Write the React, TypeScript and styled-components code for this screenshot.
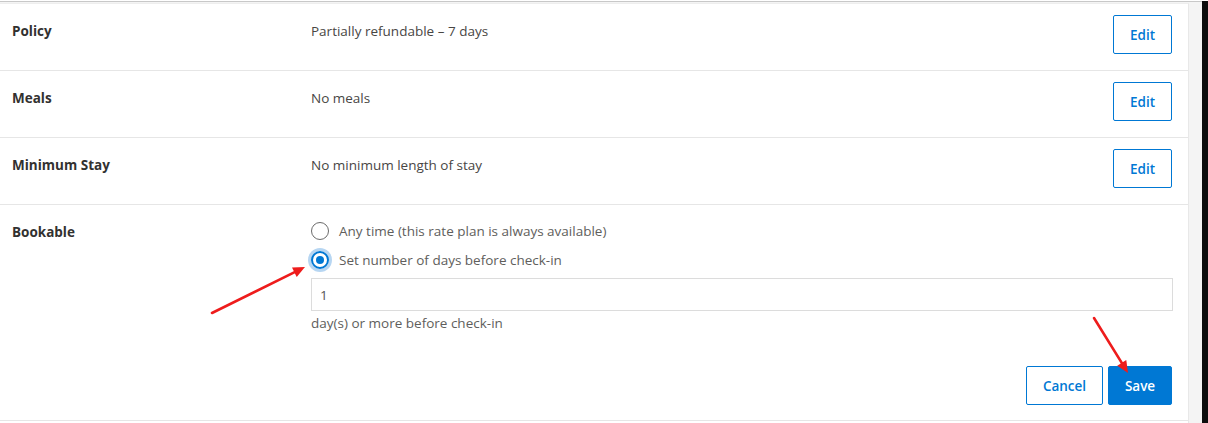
import React from 'react'
import styled, { createGlobalStyle } from 'styled-components'

const GlobalStyle = createGlobalStyle`
  html, body {
    margin: 0;
    padding: 0;
    background: #f4f4f4;
  }
  body {
    font-family: 'Open Sans', 'Liberation Sans', sans-serif;
    color: #323130;
  }
`

const Page = styled.div`
  position: relative;
  display: flex;
  width: 1208px;
  height: 423px;
  overflow: hidden;
  border-top: 1px solid #fff;
`

const Main = styled.div`
  flex: 1;
  display: flex;
  flex-direction: column;
  border-top: 1px solid #c8c8c8;
`

const Panel = styled.div`
  width: 1188px;
  margin-top: 1px;
  background: #fff;
  border-top: 1px solid #eeeeee;
  border-right: 1px solid #e8e8e8;
  flex: 1;
`

const Edge = styled.div`
  flex: 0 0 6px;
  background: #0d0d0d;
`

const Row = styled.div<{ $tall?: boolean }>`
  display: grid;
  grid-template-columns: 299px 1fr auto;
  align-items: start;
  height: ${(p) => (p.$tall ? '215px' : '66px')};
  padding: 0 16px 0 12px;
  border-bottom: 1px solid #e6e6e6;
`

const Label = styled.div`
  padding-top: 18px;
  font-size: 13.5px;
  line-height: 18px;
  font-weight: 700;
  color: #323130;
`

const Value = styled.div`
  padding-top: 18px;
  font-size: 13.5px;
  line-height: 18px;
  color: #484644;
`

const OutlineButton = styled.button`
  box-sizing: border-box;
  height: 39px;
  width: 77px;
  padding: 0;
  border: 1px solid #0078d4;
  border-radius: 2px;
  background: #fff;
  color: #0078d4;
  font-family: inherit;
  font-size: 13.5px;
  font-weight: 600;
  cursor: pointer;
`

const EditButton = styled(OutlineButton)`
  margin-top: 11px;
  width: 59px;
`

const PrimaryButton = styled(OutlineButton)`
  background: #0078d4;
  color: #fff;
  width: 64px;
`

const Options = styled.div`
  display: flex;
  flex-direction: column;
  padding-top: 11px;
`

const Choice = styled.label`
  display: flex;
  align-items: center;
  gap: 10px;
  height: 29px;
  font-size: 13.5px;
  color: #605e5c;
`

const Radio = styled.span<{ $checked?: boolean }>`
  box-sizing: border-box;
  width: 18px;
  height: 18px;
  border-radius: 50%;
  border: ${(p) => (p.$checked ? '2px solid #0078d4' : '1.5px solid #6b6b6b')};
  display: flex;
  align-items: center;
  justify-content: center;
  box-shadow: ${(p) => (p.$checked ? '0 0 0 3px #b7d6f2' : 'none')};
  &::after {
    content: '';
    display: ${(p) => (p.$checked ? 'block' : 'none')};
    width: 8px;
    height: 8px;
    border-radius: 50%;
    background: #0078d4;
  }
`

const NumberInput = styled.input`
  box-sizing: border-box;
  width: 862px;
  height: 33px;
  margin-top: 4px;
  padding: 0 8px;
  border: 1px solid #dcdcdc;
  font-family: inherit;
  font-size: 13.5px;
  color: #555;
  outline: none;
`

const Hint = styled.div`
  margin-top: 3px;
  font-size: 13.5px;
  line-height: 18px;
  color: #605e5c;
`

const Actions = styled.div`
  display: flex;
  justify-content: flex-end;
  gap: 5px;
  margin-top: 34px;
  margin-right: 1px;
`

const Annotations = styled.svg`
  position: absolute;
  left: 0;
  top: 0;
  pointer-events: none;
`

const Arrow = ({ x1, y1, x2, y2 }: { x1: number; y1: number; x2: number; y2: number }) => {
  const a = Math.atan2(y2 - y1, x2 - x1)
  const len = 13
  const w = 0.42
  const p1 = [x2 - len * Math.cos(a - w), y2 - len * Math.sin(a - w)]
  const p2 = [x2 - len * Math.cos(a + w), y2 - len * Math.sin(a + w)]
  const bx = x2 - len * 0.8 * Math.cos(a)
  const by = y2 - len * 0.8 * Math.sin(a)
  return (
    <g>
      <line x1={x1} y1={y1} x2={bx} y2={by} stroke="#ee1c1c" strokeWidth={2.6} strokeLinecap="round" />
      <polygon points={`${x2},${y2} ${p1[0]},${p1[1]} ${p2[0]},${p2[1]}`} fill="#ee1c1c" />
    </g>
  )
}

const rows = [
  { label: 'Policy', value: 'Partially refundable – 7 days' },
  { label: 'Meals', value: 'No meals' },
  { label: 'Minimum Stay', value: 'No minimum length of stay' },
]

export default function App() {
  return (
    <>
      <GlobalStyle />
      <Page>
        <Main>
          <Panel>
            {rows.map((r) => (
              <Row key={r.label}>
                <Label>{r.label}</Label>
                <Value>{r.value}</Value>
                <EditButton>Edit</EditButton>
              </Row>
            ))}
            <Row $tall>
              <Label>Bookable</Label>
              <Options>
                <Choice>
                  <Radio />
                  Any time (this rate plan is always available)
                </Choice>
                <Choice>
                  <Radio $checked />
                  Set number of days before check-in
                </Choice>
                <NumberInput defaultValue="1" />
                <Hint>day(s) or more before check-in</Hint>
                <Actions>
                  <OutlineButton>Cancel</OutlineButton>
                  <PrimaryButton>Save</PrimaryButton>
                </Actions>
              </Options>
              <div />
            </Row>
          </Panel>
        </Main>
        <Edge />
        <Annotations width={1208} height={423}>
          <Arrow x1={212} y1={312} x2={305} y2={266} />
          <Arrow x1={1094} y1={317} x2={1128} y2={372} />
        </Annotations>
      </Page>
    </>
  )
}
